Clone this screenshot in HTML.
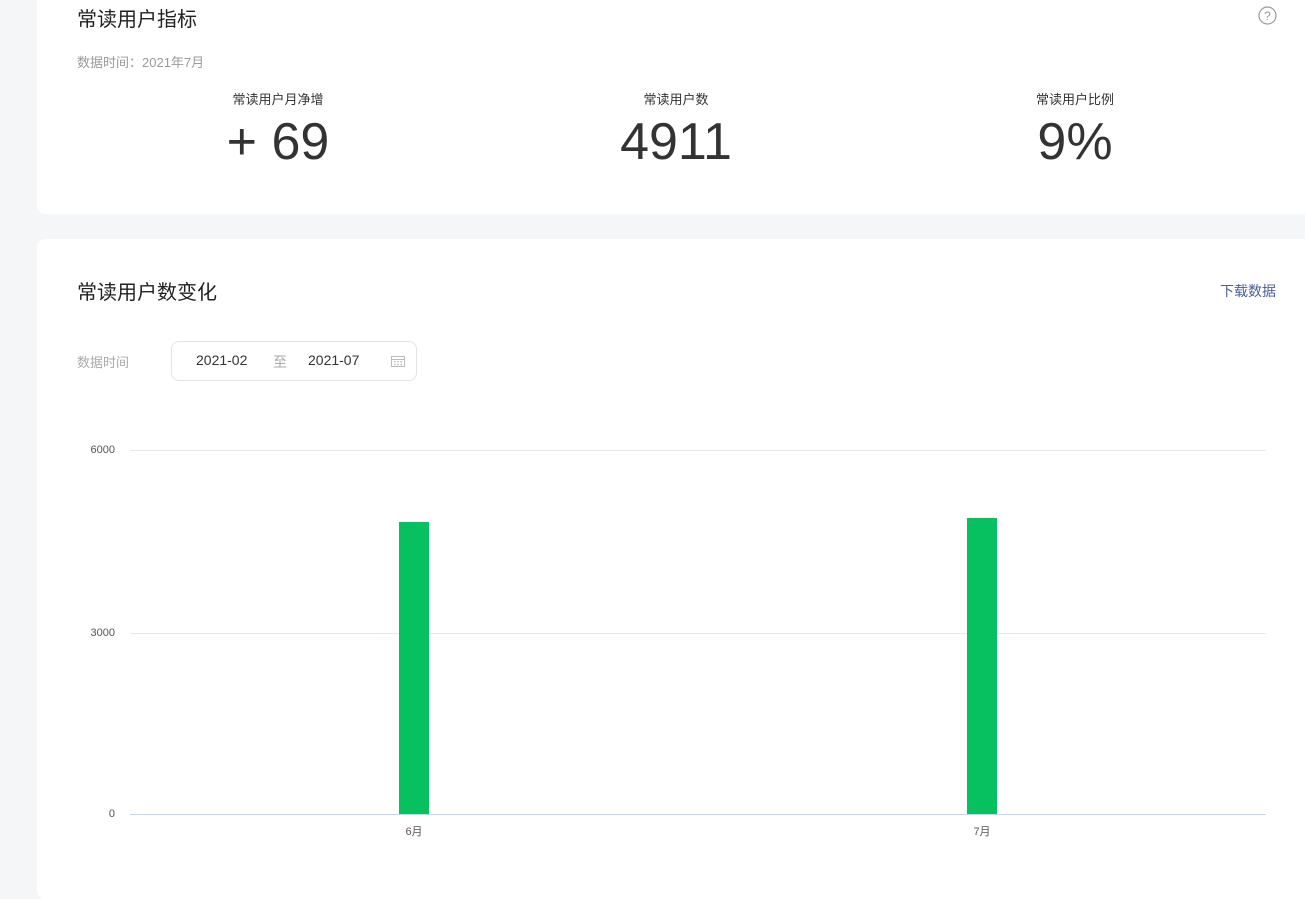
<!DOCTYPE html>
<html><head><meta charset="utf-8"><style>
*{margin:0;padding:0;box-sizing:border-box}
body{width:1305px;height:877px;overflow:hidden;background:#f5f6f7;font-family:"Liberation Sans","Noto Sans CJK SC",sans-serif;position:relative}
.card{position:absolute;left:37px;width:1290px;background:#fff;border-radius:8px}
.abs{position:absolute;white-space:nowrap}
</style></head><body>
<div class="card" style="top:-20px;height:234px"></div>
<div class="card" style="top:239px;height:660px"></div>

<div class="abs" style="left:77px;top:3px;font-size:20px;color:#222">常读用户指标</div>
<svg class="abs" style="left:1258px;top:6px" width="19" height="19" viewBox="0 0 19 19"><circle cx="9.5" cy="9.5" r="8.5" fill="none" stroke="#999" stroke-width="1.2"/><text x="9.5" y="14" text-anchor="middle" font-size="12" fill="#999" font-family="Liberation Sans">?</text></svg>
<div class="abs" style="left:77px;top:52px;font-size:13px;color:#9a9a9a">数据时间：2021年7月</div>

<div class="abs" style="left:178px;width:200px;text-align:center;top:89px;font-size:13px;color:#333">常读用户月净增</div>
<div class="abs" style="left:178px;width:200px;text-align:center;top:110px;font-size:52px;color:#333;line-height:64px">+ 69</div>
<div class="abs" style="left:576px;width:200px;text-align:center;top:89px;font-size:13px;color:#333">常读用户数</div>
<div class="abs" style="left:576px;width:200px;text-align:center;top:110px;font-size:52px;color:#333;line-height:64px">4911</div>
<div class="abs" style="left:975px;width:200px;text-align:center;top:89px;font-size:13px;color:#333">常读用户比例</div>
<div class="abs" style="left:975px;width:200px;text-align:center;top:110px;font-size:52px;color:#333;line-height:64px">9%</div>

<div class="abs" style="left:77px;top:276px;font-size:20px;color:#222">常读用户数变化</div>
<div class="abs" style="left:1220px;top:281px;font-size:14px;color:#4a5f9c">下载数据</div>

<div class="abs" style="left:77px;top:352px;font-size:13px;color:#aaa">数据时间</div>
<div class="abs" style="left:171px;top:341px;width:246px;height:40px;border:1px solid #e1e3e6;border-radius:8px"></div>
<div class="abs" style="left:196px;top:352px;font-size:14px;color:#333">2021-02</div>
<div class="abs" style="left:273px;top:352px;font-size:14px;color:#aaa">至</div>
<div class="abs" style="left:308px;top:352px;font-size:14px;color:#333">2021-07</div>
<svg class="abs" style="left:390px;top:354px" width="16" height="14" viewBox="0 0 16 14"><rect x="1.5" y="2.5" width="13" height="10" fill="none" stroke="#bbb"/><line x1="1.5" y1="5.5" x2="14.5" y2="5.5" stroke="#bbb"/><g fill="#bbb"><rect x="4" y="7" width="1.5" height="1.5"/><rect x="7.2" y="7" width="1.5" height="1.5"/><rect x="10.4" y="7" width="1.5" height="1.5"/><rect x="4" y="9.8" width="1.5" height="1.5"/><rect x="7.2" y="9.8" width="1.5" height="1.5"/><rect x="10.4" y="9.8" width="1.5" height="1.5"/></g></svg>

<div class="abs" style="left:130px;top:450px;width:1136px;height:1px;background:#e6e8eb"></div>
<div class="abs" style="left:130px;top:633px;width:1136px;height:1px;background:#e6e8eb"></div>
<div class="abs" style="left:130px;top:814px;width:1136px;height:1px;background:#c9d5e6"></div>
<div class="abs" style="left:60px;width:55px;text-align:right;top:444px;font-size:11px;color:#555">6000</div>
<div class="abs" style="left:60px;width:55px;text-align:right;top:627px;font-size:11px;color:#555">3000</div>
<div class="abs" style="left:60px;width:55px;text-align:right;top:808px;font-size:11px;color:#555">0</div>

<div class="abs" style="left:399px;top:522px;width:30px;height:292px;background:#07c160"></div>
<div class="abs" style="left:967px;top:518px;width:30px;height:296px;background:#07c160"></div>
<div class="abs" style="left:394px;width:40px;text-align:center;top:823px;font-size:11px;color:#555">6月</div>
<div class="abs" style="left:962px;width:40px;text-align:center;top:823px;font-size:11px;color:#555">7月</div>
</body></html>
